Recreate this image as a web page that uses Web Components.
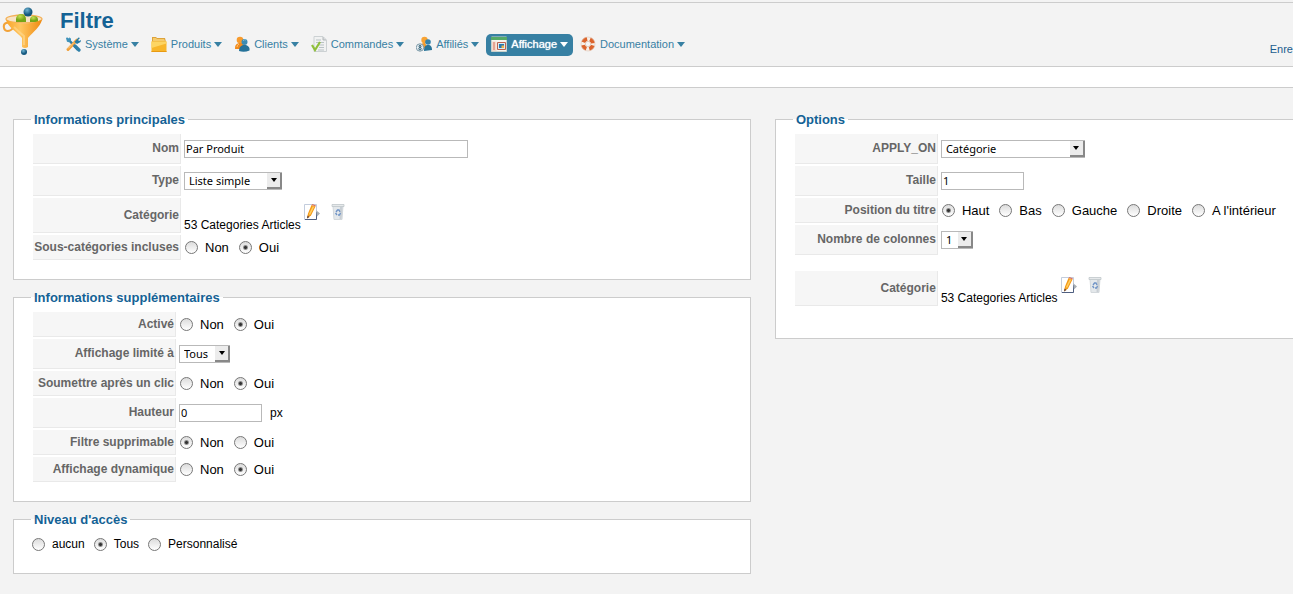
<!DOCTYPE html>
<html lang="fr">
<head>
<meta charset="utf-8">
<title>Filtre</title>
<style>
  body {
    margin: 0;
    padding-top: 2px;
    background: #f3f3f3;
    color: #000;
    font: 12px/14px "Liberation Sans", Arial, sans-serif;
  }
</style>
</head>
<body>
<page-header heading="Filtre">
  <menu-item icon="tools">Système</menu-item>
  <menu-item icon="box">Produits</menu-item>
  <menu-item icon="users">Clients</menu-item>
  <menu-item icon="order">Commandes</menu-item>
  <menu-item icon="affiliates">Affiliés</menu-item>
  <menu-item icon="display" active>Affichage</menu-item>
  <menu-item icon="help">Documentation</menu-item>
  <tool-link slot="tools">Enre</tool-link>
</page-header>

<filter-form>
  <form-panel heading="Informations principales" class="wide">
    <text-row label="Nom" value="Par Produit" size="large"></text-row>
    <select-row label="Type" value="Liste simple" size="medium"></select-row>
    <category-row label="Catégorie" value="53 Categories Articles"></category-row>
    <radio-row label="Sous-catégories incluses" options="Non,Oui" value="Oui"></radio-row>
  </form-panel>
  <form-panel heading="Informations supplémentaires">
    <radio-row label="Activé" options="Non,Oui" value="Oui"></radio-row>
    <select-row label="Affichage limité à" value="Tous" size="short"></select-row>
    <radio-row label="Soumettre après un clic" options="Non,Oui" value="Oui"></radio-row>
    <text-row label="Hauteur" value="0" unit="px"></text-row>
    <radio-row label="Filtre supprimable" options="Non,Oui" value="Non"></radio-row>
    <radio-row label="Affichage dynamique" options="Non,Oui" value="Oui"></radio-row>
  </form-panel>
  <form-panel heading="Niveau d'accès">
    <radio-group label="Niveau d'accès" options="aucun,Tous,Personnalisé" value="Tous"></radio-group>
  </form-panel>

  <form-panel heading="Options" slot="side" open-end>
    <select-row label="APPLY_ON" value="Catégorie" size="long"></select-row>
    <text-row label="Taille" value="1"></text-row>
    <radio-row label="Position du titre" options="Haut,Bas,Gauche,Droite,A l'intérieur" value="Haut"></radio-row>
    <select-row label="Nombre de colonnes" value="1" size="tiny"></select-row>
    <category-row label="Catégorie" value="53 Categories Articles" spaced></category-row>
  </form-panel>
</filter-form>

<script>
const ICONS = {
  tools: `
    <path d="M3 3l10 11" stroke="#2d7fa8" stroke-width="2.6"/>
    <path d="M1 2.2l1-1 2 1.500.500-1.500 1.500 1.500 0 2-2 1.500-2-.500z" fill="#3c91ba"/>
    <path d="M12 4L3 13.500" stroke="#f0a13c" stroke-width="3" stroke-linecap="round"/>
    <path d="M9.500 6l4-4.500 1.500.500-2 2 1 1 2-1-.500 2-3.500 2z" fill="#247ba6"/>
    <path d="M10 10l4 4" stroke="#2d7fa8" stroke-width="3.200" stroke-linecap="round"/>
    <path d="M3 12.500l6-6" stroke="#ffd08a" stroke-width="1"/>`,
  box: `
    <path d="M1 1h4l1 1h8l1 4H1z" fill="#dda33a"/>
    <path d="M2 2h3l1 1h7l1 2H2z" fill="#f6cb6c"/>
    <path d="M.500 5.500h15V16H.500z" fill="#f8b62b"/>
    <path d="M.500 5.500h15v2L.500 12z" fill="#fdd564"/>
    <path d="M.500 15.500h15" stroke="#e89a12"/>`,
  users: `
    <circle cx="6" cy="4" r="3.300" fill="#f79b2d"/>
    <path d="M1 13c0-4 1-5 4-6h3c2 1 3 3 3 6z" fill="#f28a1c"/>
    <circle cx="10.500" cy="6" r="3" fill="#3b8bb3"/>
    <path d="M5 15c0-3 1-5 4-6h3c3 1 4 3 3.500 5.500C12 16 8 16 5 15z" fill="#257299"/>
    <path d="M9 5q1-2 3-1" stroke="#74b8d5" fill="none"/>
    <path d="M3 11q0-2 2-3" stroke="#ffc675" fill="none"/>`,
  order: `
    <path d="M3 .500h9l3.500 3.500v11.500H3z" fill="#f1f2f2" stroke="#ccd1d3"/>
    <path d="M12 1v3h3" fill="#d7dadb" stroke="#b4b9bb"/>
    <path d="M5 4h5M5 6.500h8M7 9h6M8 11.500h5M7 14h6" stroke="#b9c2c5"/>
    <path d="M1 9l3 5 5-8" stroke="#8fbf3a" stroke-width="2.200" fill="none"/>`,
  affiliates: `
    <circle cx="8.500" cy="4" r="3.200" fill="#f8a333"/>
    <path d="M4 12c0-4 2-5 5-5l3 5z" fill="#f49a28"/>
    <circle cx="12" cy="6" r="2.800" fill="#3583ac"/>
    <path d="M8 15c0-4 1-6 4-6s4 2 4 5z" fill="#287499"/>
    <circle cx="4" cy="11.500" r="3.700" fill="#eaf2f6" stroke="#7b98a6"/>
    <circle cx="4" cy="10.300" r="1" fill="none" stroke="#315e74"/>
    <circle cx="4" cy="12.700" r="1.200" fill="none" stroke="#315e74"/>`,
  display: `
    <path d="M.500 1h15v14.500H.500z" fill="#f6f5f0" stroke="#c9d2cc"/>
    <path d="M0 1h16v3H0z" fill="#55aa68"/>
    <path d="M1 5.500h4.500V15H1z" fill="#f4d9cd"/>
    <path d="M2 7h2M2 9h2M2 11h2M2 13h2" stroke="#d8735d"/>
    <path d="M6.500 6.500h8v7h-8z" fill="#d9edf5" stroke="#bb6250"/>
    <path d="M8 8h5v4H8z" fill="#2778b1"/>
    <path d="M10.500 9.500H13V12h-2.500z" fill="#efb34c"/>`,
  help: `
    <circle cx="8" cy="8" r="5" fill="none" stroke="#f7f0e9" stroke-width="4.500"/>
    <circle cx="8" cy="8" r="5" fill="none" stroke="#dc642c" stroke-width="4" stroke-dasharray="4.850 3" stroke-dashoffset="-1.500"/>
    <circle cx="8" cy="8" r="7" fill="none" stroke="#ddc4b5" stroke-width=".600"/>
    <circle cx="8" cy="8" r="2.700" fill="#f6f6f6" stroke="#d6b29c" stroke-width=".600"/>`,
  edit: `
    <path d="M.500.500h12v15H.500z" fill="#fff" stroke="#c3cddd"/>
    <path d="M12.500 8v7.500H1" stroke="#4f5f80" fill="none"/>
    <path d="M12 6l4 3.500-3 3z" fill="#a8afb5"/>
    <path d="M7.500 1l4 1.500-4.500 9-4 3 1-5z" fill="#f49a1b"/>
    <path d="M9.500 2.500L5.500 10.500" stroke="#ffd163" stroke-width="1.500"/>
    <path d="M7.500 1l1-1 3.500 1.500-.500 1z" fill="#d87561"/>
    <path d="M3.500 11.500l2 1.500-2.500 1.500z" fill="#614339"/>`,
  trash: `
    <path d="M3 2h10l-1 13.500H4z" fill="#e4e8eb" stroke="#d3d8dc"/>
    <path d="M10 3h2.500l-1 12H9.500z" fill="#c9cfd4"/>
    <path d="M2 .500h12v2H2z" fill="#e6e9eb" stroke="#bfc6ca" stroke-width=".800"/>
    <path d="M6 8l1.500-2h1.500l1 2M10.500 9l-1 2H8M7 11L5.500 9" stroke="#6f93c6" stroke-width="1.300" fill="none"/>`
};

const LOGO = `
  <svg width="44" height="50" viewBox="0 0 44 50" aria-hidden="true">
    <defs>
      <linearGradient id="cone"><stop stop-color="#f9a52b"/><stop offset=".4" stop-color="#ffc660"/><stop offset="1" stop-color="#ef8a12"/></linearGradient>
      <radialGradient id="green" cx=".4" cy=".3"><stop stop-color="#c9df51"/><stop offset="1" stop-color="#75a516"/></radialGradient>
      <radialGradient id="blue" cx=".4" cy=".3"><stop stop-color="#70b4d2"/><stop offset="1" stop-color="#13577e"/></radialGradient>
    </defs>
    <path d="M9 17c-5-3-8 0-7 4s6 4 9 0" fill="none" stroke="#f2a339" stroke-width="2"/>
    <ellipse cx="22" cy="12" rx="18" ry="4" fill="#f8e3c4" stroke="#f3b056" stroke-width="1.300"/>
    <path d="M14 12a5 5 0 0 1 10 0v3H14z" fill="url(#green)"/>
    <path d="M28 13a4 4 0 0 1 8 0v2h-8z" fill="url(#green)"/>
    <circle cx="26" cy="5" r="4.500" fill="url(#blue)"/>
    <path d="M4 13q18 7 36 0c-2 7-9 12-14 18v9q-3 2-6 0v-9C15 25 6 20 4 13z" fill="url(#cone)"/>
    <path d="M12 20q5 5 10 9v9" fill="none" stroke="#ffe0a0" stroke-width="2" opacity=".5"/>
    <circle cx="22" cy="45" r="3" fill="url(#blue)"/>
  </svg>`;

function icon(name) {
  return `<svg width="16" height="16" viewBox="0 0 16 16" fill="none" aria-hidden="true">${ICONS[name]}</svg>`;
}

/* Title bar with the menu and the toolbar, and the empty submenu strip below */
class PageHeader extends HTMLElement {
  constructor() {
    super();
    this.attachShadow({ mode: 'open' });
  }

  connectedCallback() {
    this.shadowRoot.innerHTML = `
      <style>
        :host { display: block; }
        header {
          display: flex;
          gap: 14px;
          padding: 4px 0 9px 2px;
          border: solid #ccc;
          border-width: 1px 0;
          overflow: hidden;
        }
        svg { display: block; flex: none; }
        .main { display: flex; flex-direction: column; }
        h1 {
          margin: 0;
          color: #146295;
          font-size: 22px;
          line-height: 27px;
        }
        nav { display: flex; gap: 2px; }
        .tools { margin: 0 0 1px auto; align-self: flex-end; }
        .strip {
          height: 20px;
          background: #fff;
          border-bottom: 1px solid #ccc;
        }
      </style>
      <header>
        ${LOGO}
        <div class="main">
          <h1>${this.getAttribute('heading')}</h1>
          <nav><slot></slot></nav>
        </div>
        <div class="tools"><slot name="tools"></slot></div>
      </header>
      <div class="strip"></div>
    `;
  }
}

class MenuItem extends HTMLElement {
  constructor() {
    super();
    this.attachShadow({ mode: 'open' });
  }

  connectedCallback() {
    this.shadowRoot.innerHTML = `
      <style>
        :host { display: block; }
        a {
          display: flex;
          align-items: center;
          padding: 2px 5px 4px;
          border-radius: 5px;
          color: #3780a3;
          font-size: 11px;
          line-height: 16px;
          text-decoration: none;
          white-space: nowrap;
        }
        svg { margin-right: 4px; }
        i {
          margin-left: 3px;
          border: 4px solid transparent;
          border-top: 5px solid;
          border-bottom: 0;
        }
        :host([active]) a {
          background: #3780a3;
          color: #fff;
          text-shadow: 0 0 1px #fff;
        }
      </style>
      <a href="#">${icon(this.getAttribute('icon'))}<slot></slot><i></i></a>
    `;
  }
}

class ToolLink extends HTMLElement {
  constructor() {
    super();
    this.attachShadow({ mode: 'open' });
    this.shadowRoot.innerHTML = `
      <style>
        :host { display: block; }
        a { color: #1a5c8e; font-size: 11px; text-decoration: none; }
      </style>
      <a href="#"><slot></slot></a>
    `;
  }
}

class FilterForm extends HTMLElement {
  constructor() {
    super();
    this.attachShadow({ mode: 'open' });
    this.shadowRoot.innerHTML = `
      <style>
        :host { display: block; }
        form {
          display: grid;
          grid-template-columns: 47fr 33fr;
          gap: 24px;
          align-items: start;
          padding: 24px 0 20px 13px;
        }
        .column { display: grid; gap: 10px; }
      </style>
      <form>
        <div class="column"><slot></slot></div>
        <div class="column"><slot name="side"></slot></div>
      </form>
    `;
  }
}

class FormPanel extends HTMLElement {
  constructor() {
    super();
    this.attachShadow({ mode: 'open' });
  }

  connectedCallback() {
    this.shadowRoot.innerHTML = `
      <style>
        :host { display: block; --label-width: 143px; }
        :host(.wide) { --label-width: 148px; }
        fieldset {
          min-width: 0;
          margin: 0;
          padding: 7px 17px 19px;
          border: 1px solid #ccc;
          background: #fff;
        }
        :host([open-end]) fieldset {
          padding-right: 0;
          padding-bottom: 32px;
          border-right: 0;
        }
        legend {
          padding: 0 3px;
          color: #146295;
          font-size: 13px;
          font-weight: bold;
          line-height: 15px;
        }
        .rows { display: grid; gap: 2px; }
      </style>
      <fieldset>
        <legend>${this.getAttribute('heading')}</legend>
        <div class="rows"><slot></slot></div>
      </fieldset>
    `;
  }
}

/* Base of all rows: grey caption cell on the left, control on the right */
class FormRow extends HTMLElement {
  constructor() {
    super();
    this.attachShadow({ mode: 'open' });
  }

  connectedCallback() {
    this.shadowRoot.innerHTML = `
      <style>
        :host { display: block; padding-left: 2px; }
        :host([spaced]) { margin-top: 14px; }
        .row {
          display: grid;
          grid-template-columns: var(--label-width) 1fr;
          gap: 3px;
          min-height: 30px;
        }
        .caption {
          display: flex;
          align-items: center;
          justify-content: flex-end;
          padding: 0 1px 1px 0;
          border: solid #e9e9e9;
          border-width: 0 1px 1px 0;
          background: #f6f6f6;
          color: #666;
          font-weight: bold;
          white-space: nowrap;
        }
        .control { display: flex; align-items: center; }
        input, select {
          box-sizing: border-box;
          height: 18px;
          margin: 0;
          border: 1px solid #b9b9b9;
          border-radius: 0;
          background: #fff;
          color: #000;
          font: 11px/16px "Noto Sans", "Open Sans", sans-serif;
        }
        ${this.styles()}
      </style>
      <div class="row">
        ${this.caption()}
        <div class="control">${this.control()}</div>
      </div>
    `;
  }

  caption() {
    return `<label class="caption" for="field">${this.getAttribute('label')}</label>`;
  }

  styles() {
    return '';
  }

  control() {
    return '';
  }
}

class TextRow extends FormRow {
  styles() {
    return `
      input { width: 83px; padding: 0 1px 2px; }
      :host([size="large"]) input { width: 284px; }
      .unit { margin-left: 8px; }
    `;
  }

  control() {
    const unit = this.getAttribute('unit');
    return `<input id="field" type="text" value="${this.getAttribute('value')}">
      ${unit ? `<span class="unit">${unit}</span>` : ''}`;
  }
}

class SelectRow extends FormRow {
  styles() {
    return `
      .select { display: grid; align-items: center; }
      .select > * { grid-area: 1 / 1; }
      select { appearance: none; width: 98px; padding: 0 4px; }
      :host([size="short"]) select { width: 51px; }
      :host([size="long"]) select { width: 144px; }
      :host([size="tiny"]) select { width: 32px; }
      .arrow {
        display: grid;
        place-items: center;
        justify-self: end;
        box-sizing: border-box;
        width: 15px;
        height: 16px;
        border: solid #888;
        border-width: 0 2px 2px 0;
        background: #ececec;
        pointer-events: none;
      }
      .arrow::after {
        content: "";
        border: 3px solid transparent;
        border-top: 4px solid #000;
        border-bottom: 0;
      }
    `;
  }

  control() {
    return `<span class="select">
      <select id="field"><option>${this.getAttribute('value')}</option></select>
      <span class="arrow"></span>
    </span>`;
  }
}

class RadioGroup extends HTMLElement {
  constructor() {
    super();
    this.attachShadow({ mode: 'open' });
  }

  connectedCallback() {
    const value = this.getAttribute('value');
    const options = this.getAttribute('options').split(',');
    this.shadowRoot.innerHTML = `
      <style>
        :host { display: block; }
        .group {
          display: flex;
          gap: var(--radio-gap, 9px);
          min-height: 20px;
          padding: 0 1px;
        }
        label { display: flex; align-items: center; gap: 7px; white-space: nowrap; }
        input {
          appearance: none;
          box-sizing: border-box;
          width: 13px;
          height: 13px;
          margin: 0;
          border: 1px solid #777;
          border-radius: 50%;
          background: linear-gradient(#dcdcdc, #fff);
        }
        input:checked {
          background: radial-gradient(circle, #333 0 1px, transparent 3px), linear-gradient(#dcdcdc, #fff);
        }
      </style>
      <div class="group" role="radiogroup" aria-label="${this.getAttribute('label')}">
        ${options.map((option) => `
          <label><input type="radio" name="choice"${option === value ? ' checked' : ''}>${option}</label>
        `).join('')}
      </div>
    `;
  }
}

class RadioRow extends FormRow {
  styles() {
    return `
      .row { min-height: 25px; }
      radio-group { --radio-gap: 10px; font-size: 13px; }
    `;
  }

  caption() {
    return `<span class="caption">${this.getAttribute('label')}</span>`;
  }

  control() {
    return `<radio-group label="${this.getAttribute('label')}"
      options="${this.getAttribute('options')}" value="${this.getAttribute('value')}"></radio-group>`;
  }
}

class CategoryRow extends FormRow {
  styles() {
    return `
      .row { min-height: 35px; }
      .control { align-items: stretch; }
      .value { align-self: flex-end; margin: 0 3px 1px 0; }
      button {
        align-self: flex-start;
        margin: 6px 10px 0 0;
        padding: 0;
        border: 0;
        background: none;
        cursor: pointer;
      }
      svg { display: block; }
    `;
  }

  caption() {
    return `<span class="caption">${this.getAttribute('label')}</span>`;
  }

  control() {
    return `<span class="value">${this.getAttribute('value')}</span>
      <button type="button" aria-label="Modifier">${icon('edit')}</button>
      <button type="button" aria-label="Supprimer">${icon('trash')}</button>`;
  }
}

customElements.define('page-header', PageHeader);
customElements.define('menu-item', MenuItem);
customElements.define('tool-link', ToolLink);
customElements.define('filter-form', FilterForm);
customElements.define('form-panel', FormPanel);
customElements.define('text-row', TextRow);
customElements.define('select-row', SelectRow);
customElements.define('radio-group', RadioGroup);
customElements.define('radio-row', RadioRow);
customElements.define('category-row', CategoryRow);
</script>
</body>
</html>
